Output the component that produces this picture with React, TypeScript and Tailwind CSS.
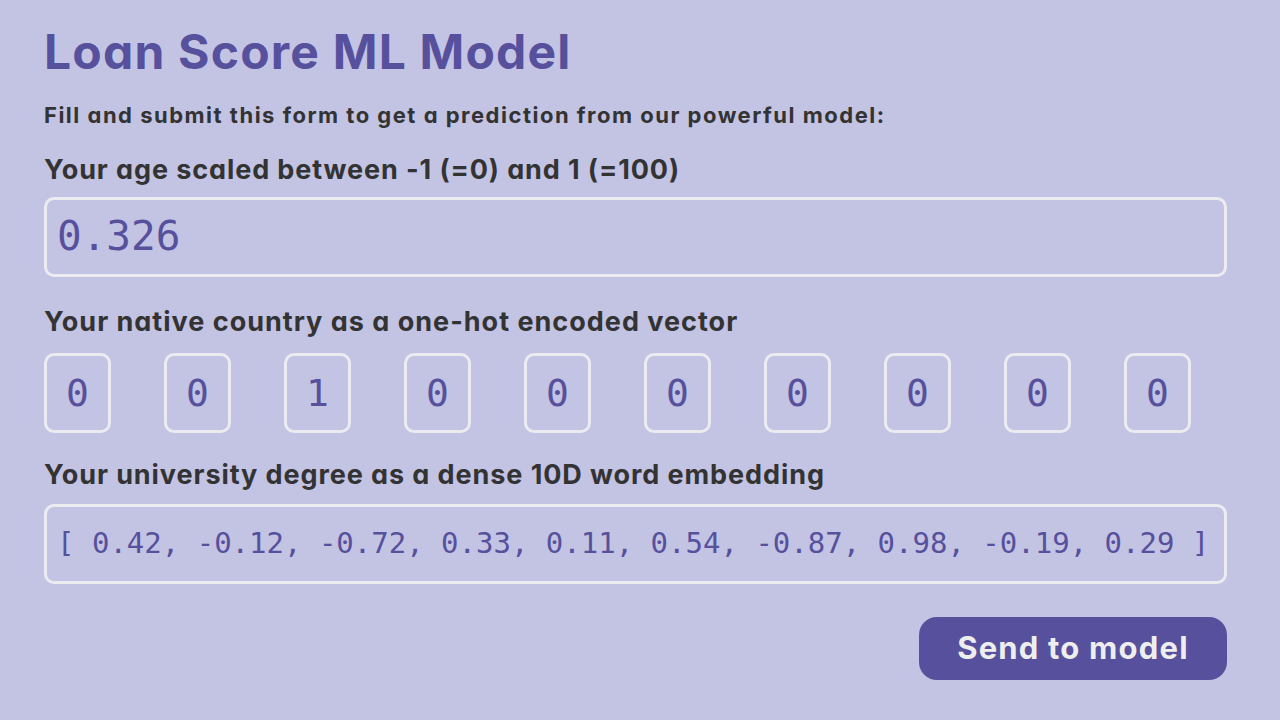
import React from "react";

const sans = { fontFamily: "Inter, 'Noto Sans', sans-serif" };
const mono = { fontFamily: "'DejaVu Sans Mono', monospace" };

export default function App() {
  const onehot = [0, 0, 1, 0, 0, 0, 0, 0, 0, 0];
  return (
    <div
      className="w-[1280px] h-[720px] bg-[#c3c3e3] px-[44px] pt-[22px] flex flex-col overflow-hidden [font-feature-settings:'cv11','ss01']"
      style={sans}
    >
      <h1 className="text-[48px] leading-[60px] font-bold text-[#56509d] tracking-[1.2px]">
        Loan Score ML Model
      </h1>
      <p className="mt-[20px] text-[22px] leading-[26px] font-bold text-[#333333] tracking-[1.5px]">
        Fill and submit this form to get a prediction from our powerful model:
      </p>
      <label className="mt-[26px] text-[27px] leading-[32px] font-bold text-[#333333] tracking-[0.9px]">
        Your age scaled between -1 (=0) and 1 (=100)
      </label>
      <div className="mt-[11px] h-[80px] w-[1183px] border-[3px] border-[#ececf0] rounded-[10px] flex items-center px-[10px]">
        <span className="text-[41px] text-[#56509d]" style={mono}>
          0.326
        </span>
      </div>
      <label className="mt-[29px] text-[27px] leading-[32px] font-bold text-[#333333] tracking-[1px]">
        Your native country as a one-hot encoded vector
      </label>
      <div className="mt-[15px] flex gap-[53px]">
        {onehot.map((v, i) => (
          <div
            key={i}
            className="w-[67px] h-[80px] border-[3px] border-[#ececf0] rounded-[10px] flex items-center justify-center text-[38px] text-[#56509d]"
            style={mono}
          >
            {v}
          </div>
        ))}
      </div>
      <label className="mt-[26px] text-[27px] leading-[32px] font-bold text-[#333333] tracking-[0.92px]">
        Your university degree as a dense 10D word embedding
      </label>
      <div className="mt-[13px] h-[80px] w-[1183px] border-[3px] border-[#ececf0] rounded-[10px] flex items-center px-[10px]">
        <span className="text-[29px] text-[#56509d] whitespace-pre" style={mono}>
          [ 0.42, -0.12, -0.72, 0.33, 0.11, 0.54, -0.87, 0.98, -0.19, 0.29 ]
        </span>
      </div>
      <div className="mt-[33px] w-[1183px] flex justify-end">
        <button className="w-[308px] h-[63px] rounded-[18px] bg-[#56509d] text-[#eeeeee] text-[31px] font-bold tracking-[1.2px]">
          Send to model
        </button>
      </div>
    </div>
  );
}
